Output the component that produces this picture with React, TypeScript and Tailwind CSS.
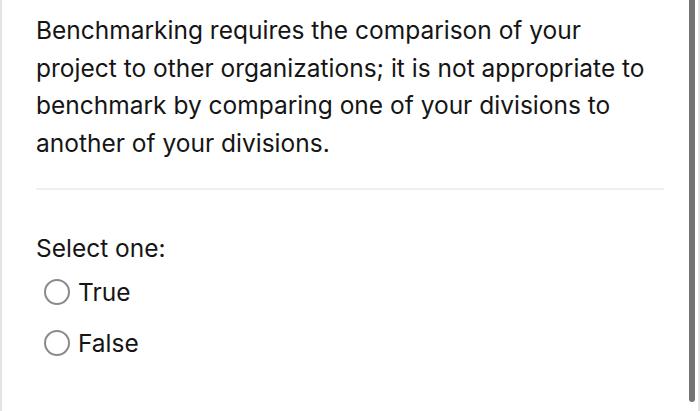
export default function App() {
  const font = { fontFamily: 'Inter, "Noto Sans", sans-serif' };
  return (
    <div className="w-[700px] h-[411px] bg-white flex overflow-hidden" style={font}>
      <div className="w-[2px] shrink-0 bg-[#e4e4e4]" />
      <div className="flex-1 min-w-0 flex flex-col pl-[34px] pr-[25px]">
        <p className="pt-[12px] text-[24.5px] leading-[37.5px] text-[#151515]">
          Benchmarking requires the comparison of your project to other organizations; it is not appropriate to
          benchmark by comparing one of your divisions to another of your divisions.
        </p>
        <div className="mt-[26px] h-[2px] bg-[#efefef]" />
        <div className="mt-[43px] text-[24.5px] leading-[30px] text-[#151515]">Select one:</div>
        <div className="mt-[15px] flex flex-col gap-[23px] pl-[8px]">
          {["True", "False"].map((t) => (
            <label key={t} className="flex items-center gap-[8px] text-[24.5px] leading-[28px] text-[#151515]">
              <span className="w-[26px] h-[26px] shrink-0 rounded-full border-[2.5px] border-[#8a8a8a]" />
              {t}
            </label>
          ))}
        </div>
      </div>
      <div className="w-[6px] shrink-0 self-start h-[402px] bg-neutral-500 rounded-b-sm mr-[3px]" />
      <div className="w-[2px] shrink-0 self-stretch bg-[#e4e4e4]" />
    </div>
  );
}
